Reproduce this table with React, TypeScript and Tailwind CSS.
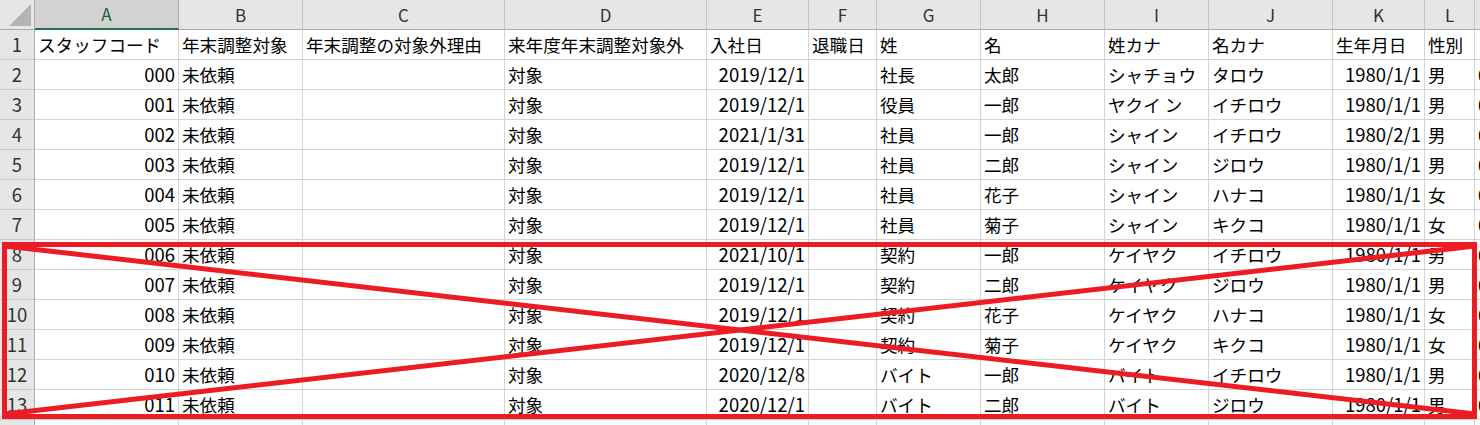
import React from 'react'

const letters = ['A', 'B', 'C', 'D', 'E', 'F', 'G', 'H', 'I', 'J', 'K', 'L', 'M']

const rows = [
    ['スタッフコード', '年末調整対象', '年末調整の対象外理由', '来年度年末調整対象外', '入社日', '退職日', '姓', '名', '姓カナ', '名カナ', '生年月日', '性別', ''],
    ['000', '未依頼', '', '対象', '2019/12/1', '', '社長', '太郎', 'シャチョウ', 'タロウ', '1980/1/1', '男', '000-0000'],
    ['001', '未依頼', '', '対象', '2019/12/1', '', '役員', '一郎', 'ヤクイ ン', 'イチロウ', '1980/1/1', '男', '000-0000'],
    ['002', '未依頼', '', '対象', '2021/1/31', '', '社員', '一郎', 'シャイン', 'イチロウ', '1980/2/1', '男', '000-0000'],
    ['003', '未依頼', '', '対象', '2019/12/1', '', '社員', '二郎', 'シャイン', 'ジロウ', '1980/1/1', '男', '000-0000'],
    ['004', '未依頼', '', '対象', '2019/12/1', '', '社員', '花子', 'シャイン', 'ハナコ', '1980/1/1', '女', '000-0000'],
    ['005', '未依頼', '', '対象', '2019/12/1', '', '社員', '菊子', 'シャイン', 'キクコ', '1980/1/1', '女', '000-0000'],
    ['006', '未依頼', '', '対象', '2021/10/1', '', '契約', '一郎', 'ケイヤク', 'イチロウ', '1980/1/1', '男', '000-0000'],
    ['007', '未依頼', '', '対象', '2019/12/1', '', '契約', '二郎', 'ケイヤク', 'ジロウ', '1980/1/1', '男', '000-0000'],
    ['008', '未依頼', '', '対象', '2019/12/1', '', '契約', '花子', 'ケイヤク', 'ハナコ', '1980/1/1', '女', '000-0000'],
    ['009', '未依頼', '', '対象', '2019/12/1', '', '契約', '菊子', 'ケイヤク', 'キクコ', '1980/1/1', '女', '000-0000'],
    ['010', '未依頼', '', '対象', '2020/12/8', '', 'バイト', '一郎', 'バイト', 'イチロウ', '1980/1/1', '男', '000-0000'],
    ['011', '未依頼', '', '対象', '2020/12/1', '', 'バイト', '二郎', 'バイト', 'ジロウ', '1980/1/1', '男', '000-0000'],
    ['', '', '', '', '', '', '', '', '', '', '', '', ''],
]

// columns holding numbers/dates sit on the right
const rightCols = [0, 4, 10]

const App = () => {
    return (
        <div className="relative h-[425px] w-[1480px] overflow-hidden bg-white font-['Noto_Sans_CJK_JP',sans-serif] text-black">
            <div className="grid w-max grid-cols-[35px_144px_124px_202px_202px_102px_68px_104px_124px_104px_124px_92px_50px_124px] auto-rows-[30px]">

                {/* corner */}
                <div className="relative bg-[#e6e6e6] border-r border-b border-[#ababab]">
                    <svg className="absolute left-0 top-0" width="34" height="29">
                        <polygon points="9,26 31,26 31,4" fill="#b4b4b4" />
                    </svg>
                </div>

                {letters.map((l, i) => (
                    <div
                        key={l}
                        className={
                            i === 0
                                ? 'flex items-center justify-center bg-[#d2d2d2] border-r border-[#ababab] border-b-2 border-b-[#217346] text-[#1f5c3a] text-[17px]'
                                : 'flex items-center justify-center bg-[#e6e6e6] border-r border-b border-[#c4c4c4] border-b-[#ababab] text-[#333] text-[17px]'
                        }
                    >
                        {l}
                    </div>
                ))}

                {rows.map((row, r) => (
                    <React.Fragment key={r}>
                        <div className="flex items-center justify-center bg-[#e6e6e6] border-r border-r-[#ababab] border-b border-b-[#c8c8c8] text-[#333] text-[18.5px]">
                            {r + 1}
                        </div>
                        {row.map((cell, c) => (
                            <div
                                key={c}
                                className={
                                    r > 0 && rightCols.includes(c)
                                        ? 'flex items-center justify-end overflow-hidden whitespace-nowrap border-r border-b border-[#d4d4d4] pr-[3px] text-[18.5px] leading-none'
                                        : 'flex items-center overflow-hidden whitespace-nowrap border-r border-b border-[#d4d4d4] pl-[3px] text-[17.6px] leading-none'
                                }
                            >
                                {cell}
                            </div>
                        ))}
                    </React.Fragment>
                ))}
            </div>

            {/* red cross-out over rows 8-13 */}
            <svg className="pointer-events-none absolute left-0 top-0" width="1480" height="425">
                <rect x="4.5" y="244.5" width="1470" height="172" fill="none" stroke="#ed1c24" strokeWidth="5" />
                <line x1="5" y1="246" x2="1475" y2="414" stroke="#ed1c24" strokeWidth="5" />
                <line x1="5" y1="414" x2="1475" y2="246" stroke="#ed1c24" strokeWidth="5" />
            </svg>
        </div>
    )
}

export default App
